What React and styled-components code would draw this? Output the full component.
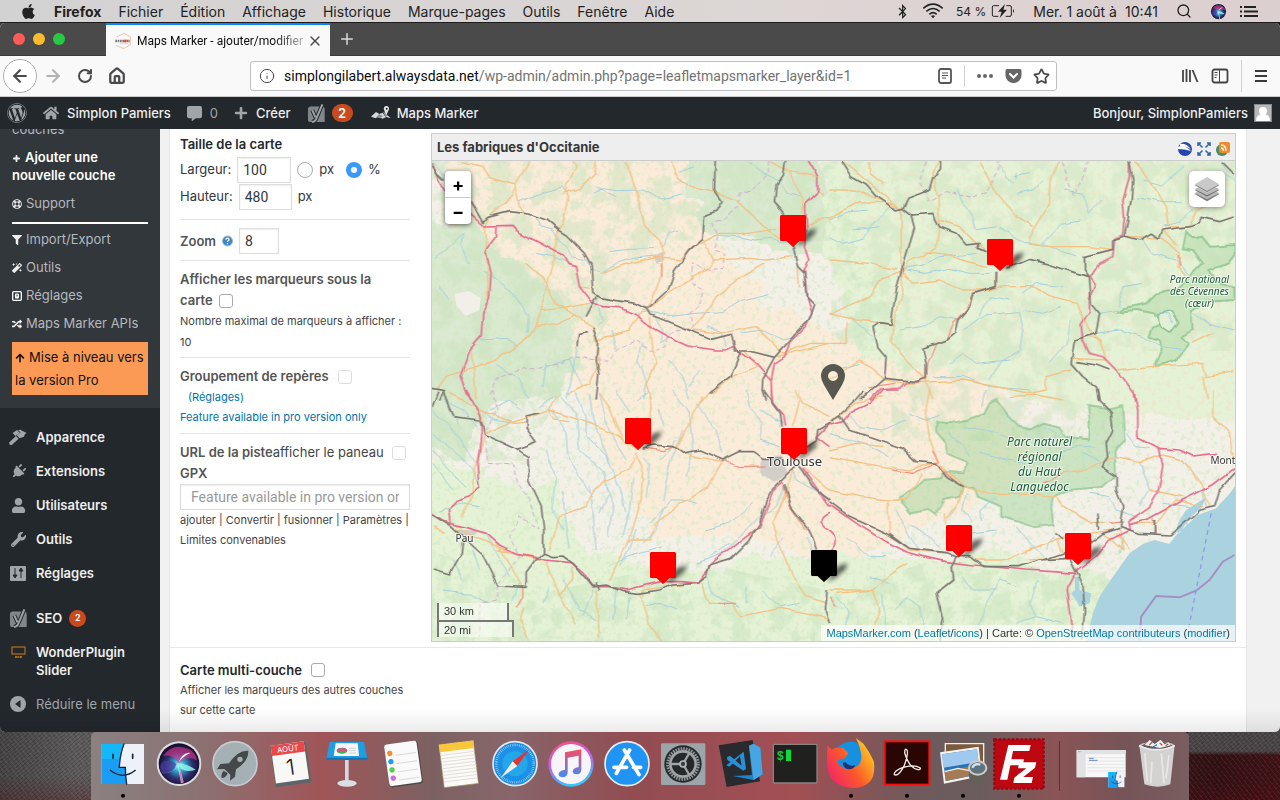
import React from "react";
import styled, { createGlobalStyle } from "styled-components";
import { FaWordpress, FaHome, FaCommentAlt, FaPlus, FaRegLifeRing, FaFilter, FaMagic, FaRandom, FaArrowUp, FaPlug, FaUser, FaWrench, FaApple, FaBluetoothB } from "react-icons/fa";
import { Search, ArrowLeft, ArrowRight, RotateCw, House, Info, Star, X, Plus } from "lucide-react";

const Global = createGlobalStyle`
  *, *::before, *::after { box-sizing: border-box; }
  body { margin: 0; font-family: Inter, "Open Sans", sans-serif; font-size: 13px; color: #444; background: #2a2627; }
  a { color: inherit; text-decoration: none; }
  button { font: inherit; color: inherit; background: none; border: 0; padding: 0; display: inline-flex; align-items: center; justify-content: center; }
  svg { display: block; flex: none; }
`;

const Desktop = styled.div`
  height: 100vh;
  display: flex;
  flex-direction: column;
  overflow: hidden;
  background:
    repeating-linear-gradient(52deg, rgba(255,255,255,.06) 0 1px, transparent 1px 4px),
    repeating-linear-gradient(-40deg, rgba(0,0,0,.14) 0 1px, transparent 1px 3px),
    linear-gradient(to bottom, transparent 97%, rgba(90,12,20,.3) 100%),
    linear-gradient(to bottom, #4a4647 30%, transparent 36%) right bottom / 92px 70px no-repeat,
    linear-gradient(to right, #454343 0, #5c5a5a 6%, #6b5556 50%, #331013 95%, #421317 100%);
`;

/* macOS menu bar */
const MenuBar = styled.header`
  flex: none;
  height: 23px;
  padding: 0 22px 0 20px;
  display: flex;
  align-items: center;
  justify-content: space-between;
  background: linear-gradient(to right, #d3d2d2, #dcd6d5 60%, #dccfcf);
  border-bottom: 1px solid #1c1c1c;
  color: #222;
  font-size: 14px;
`;
const MenuList = styled.nav`
  display: flex;
  align-items: center;
  gap: 17px;
  white-space: nowrap;
`;
const MenuButton = styled.button`
  font-weight: ${(p) => (p.$bold ? 700 : 400)};
`;
const StatusList = styled.div`
  display: flex;
  align-items: center;
  gap: 18px;
  white-space: nowrap;
`;
const StatusGroup = styled.span`
  display: flex;
  align-items: center;
  gap: ${(p) => p.$gap}px;
  font-size: ${(p) => p.$size || 14}px;
`;

/* Browser window */
const BrowserWindow = styled.section`
  flex: 1;
  min-height: 0;
  display: flex;
  flex-direction: column;
  overflow: hidden;
  border-radius: 5px;
  background: #f1f1f1;
`;
const TabStrip = styled.div`
  flex: none;
  height: 33px;
  display: flex;
  align-items: stretch;
  background: #4a4a4a;
  color: #ddd;
  border-bottom: 1px solid #3a3a3a;
`;
const WindowButtons = styled.div`
  width: 106px;
  padding: 0 13px;
  display: flex;
  align-items: center;
  gap: 8px;
`;
const WindowButton = styled.button`
  width: 12px;
  height: 12px;
  border-radius: 50%;
  background: ${(p) => p.$color};
`;
const Tab = styled.div`
  width: 224px;
  height: 33px;
  padding: 0 9px;
  display: flex;
  align-items: center;
  gap: 6px;
  background: #f9f9fa;
  border-top: 2px solid #0a84ff;
  color: #0c0c0d;
  font-family: Roboto, sans-serif;
  font-size: 12px;
`;
const TabTitle = styled.span`
  flex: 1;
  overflow: hidden;
  white-space: nowrap;
  mask-image: linear-gradient(to right, #000 82%, rgba(0,0,0,.3));
`;
const TabClose = styled.button`
  width: 12px;
`;
const NewTab = styled.button`
  width: 34px;
`;
const Toolbar = styled.div`
  flex: none;
  height: 41px;
  display: flex;
  align-items: center;
  background: #f9f9fa;
  border-bottom: 1px solid #ccc;
  color: #4a4a4c;
`;
const NavButtons = styled.div`
  width: 250px;
  padding-left: 3px;
  display: flex;
  align-items: center;
`;
const NavButton = styled.button`
  width: 32px;
  height: 34px;
  opacity: ${(p) => (p.$dim ? 0.4 : 1)};
`;
const BackButton = styled.button`
  width: 34px;
  height: 34px;
  border-radius: 50%;
  border: 1px solid #b1b1b3;
  background: #fff;
`;
const UrlBar = styled.form`
  flex: 1;
  min-width: 0;
  height: 30px;
  padding: 0 6px 0 8px;
  display: flex;
  align-items: center;
  gap: 9px;
  background: #fff;
  border: 1px solid #c0c0c2;
  border-radius: 3px;
`;
const UrlText = styled.div`
  flex: 1;
  min-width: 0;
  overflow: hidden;
  white-space: nowrap;
  color: #737373;
  font-family: Roboto, sans-serif;
  font-size: 14px;
  b { color: #0c0c0d; font-weight: 400; }
`;
const PageActions = styled.div`
  display: flex;
  align-items: center;
  gap: 11px;
`;
const Divider = styled.span`
  width: 1px;
  height: ${(p) => p.$height}px;
  background: #d0d0d2;
`;
const ToolbarEnd = styled.div`
  width: 223px;
  padding-right: 12px;
  display: flex;
  align-items: center;
  justify-content: flex-end;
  gap: 12px;
`;

/* WordPress admin bar */
const AdminBar = styled.div`
  flex: none;
  height: 32px;
  padding: 0 8px 0 7px;
  display: flex;
  align-items: center;
  background: #23282d;
  color: #eee;
  font-weight: 500;
`;
const AdminItem = styled.a`
  display: flex;
  align-items: center;
  gap: ${(p) => p.$gap || 8}px;
  margin-right: ${(p) => p.$after || 16}px;
  white-space: nowrap;
  svg { color: #a0a5aa; }
`;
const Muted = styled.span`
  color: #a0a5aa;
  font-weight: 400;
`;
const AdminAccount = styled.a`
  margin-left: auto;
  display: flex;
  align-items: center;
  gap: 6px;
`;
const Badge = styled.span`
  min-width: ${(p) => (p.$large ? 21 : 17)}px;
  height: ${(p) => (p.$large ? 18 : 17)}px;
  border-radius: 9px;
  display: inline-flex;
  align-items: center;
  justify-content: center;
  background: #ca4a1f;
  color: #fff;
  font-size: ${(p) => (p.$large ? 13 : 9)}px;
  font-weight: 600;
`;

/* Admin body */
const Body = styled.div`
  flex: 1;
  min-height: 0;
  display: flex;
  overflow: hidden;
  position: relative;
  &::after {
    content: "";
    position: absolute;
    inset: auto 0 0 0;
    height: 24px;
    pointer-events: none;
    background: linear-gradient(to bottom, transparent, rgba(0,0,0,.08));
  }
`;
const Sidebar = styled.nav`
  flex: none;
  width: 160px;
  background: #23282d;
  color: #eee;
`;
const Submenu = styled.div`
  padding: 0 12px 13px;
  background: #32373c;
  color: #b4b9be;
`;
const ClippedEntry = styled.div`
  height: 14px;
  overflow: hidden;
  display: flex;
  align-items: flex-end;
`;
const SubLink = styled.a`
  display: block;
  padding: 5px 0;
  line-height: 18px;
  color: ${(p) => (p.$current ? "#fff" : "inherit")};
  font-weight: ${(p) => (p.$current ? 600 : 400)};
  svg { display: inline-block; vertical-align: -1px; margin-right: 4px; color: #eee; }
`;
const SubRule = styled.hr`
  margin: 5px 0 1px;
  border: 0;
  height: 2px;
  background: #fff;
`;
const Upgrade = styled.a`
  display: block;
  margin-top: 5px;
  padding: 4px 3px 3px;
  background: #fb9a55;
  color: #111;
  line-height: 23px;
  svg { display: inline-block; vertical-align: -1px; margin-right: 4px; }
`;
const MainMenu = styled.div`
  padding-top: 12px;
`;
const MainLink = styled.a`
  display: flex;
  padding: 8px 0;
  margin-bottom: ${(p) => (p.$gapAfter ? 11 : 0)}px;
  line-height: 18px;
  font-weight: ${(p) => (p.$muted ? 400 : 600)};
  color: ${(p) => (p.$muted ? "#a0a5aa" : "#eee")};
`;
const MainIcon = styled.span`
  width: 36px;
  height: 18px;
  display: flex;
  align-items: center;
  justify-content: center;
  color: #a0a5aa;
`;
const MainLabel = styled.span`
  flex: 1;
  display: flex;
  align-items: center;
  gap: 7px;
`;
const Main = styled.main`
  flex: 1;
  min-width: 0;
  padding: 0 33px 0 9px;
`;
const Panel = styled.div`
  height: 100%;
  background: #fff;
  border: solid #e5e5e5;
  border-width: 0 1px;
`;
const PanelRow = styled.div`
  display: flex;
  gap: 21px;
  padding: 4px 10px 5px;
  border-bottom: 1px solid #e8e8e8;
`;
const Settings = styled.form`
  flex: none;
  width: 230px;
  line-height: 21px;
`;
const Group = styled.div`
  padding: ${(p) => p.$pad || "8px 0 5px"};
  border-bottom: ${(p) => (p.$last ? 0 : 1)}px solid #e5e5e5;
`;
const Line = styled.div`
  display: flex;
  align-items: center;
  gap: 6px;
  height: ${(p) => p.$height || 21}px;
  color: #32373c;
  white-space: nowrap;
`;
const Heading = styled.label`
  font-weight: 600;
  color: ${(p) => (p.$dark ? "#23282d" : "#555")};
`;
const Small = styled.div`
  font-size: 11px;
  line-height: ${(p) => p.$leading || 21}px;
  padding-left: ${(p) => (p.$indent ? 8 : 0)}px;
  color: ${(p) => (p.$link ? "#0073aa" : "#444")};
  white-space: nowrap;
`;
const Field = styled.input`
  width: ${(p) => p.$width};
  height: 26px;
  padding: 0 ${(p) => p.$pad || 5}px;
  border: 1px solid #ddd;
  box-shadow: inset 0 1px 2px rgba(0,0,0,.07);
  background: #fff;
  color: #32373c;
  font: 400 14px Roboto, sans-serif;
  outline: 0;
  &::placeholder { color: #999; }
`;
const Check = styled.input`
  appearance: none;
  width: 14px;
  height: 14px;
  margin: 0 0 0 ${(p) => p.$before || 0}px;
  border: 1px solid ${(p) => (p.disabled ? "#ddd" : "#aaa")};
  border-radius: 3px;
  background: #fff;
  vertical-align: middle;
`;
const Radio = styled.input`
  appearance: none;
  width: 16px;
  height: 16px;
  margin: 0 0 0 ${(p) => p.$before || 0}px;
  border: 1px solid #aaa;
  border-radius: 50%;
  background: #fff;
  &:checked { border: 5px solid #3b99fc; }
`;
const TopAligned = styled.div`
  display: flex;
  align-items: flex-start;
  white-space: nowrap;
`;

/* Map */
const MapBox = styled.section`
  flex: 1;
  min-width: 0;
  border: 1px solid #ccc;
`;
const MapHeader = styled.div`
  height: 27px;
  padding: 0 5px;
  display: flex;
  align-items: center;
  justify-content: space-between;
  background: #eee;
  border-bottom: 1px solid #ccc;
`;
const MapTitle = styled.h2`
  margin: 0;
  font-size: 13px;
  font-weight: 700;
  color: #373737;
`;
const MapLinks = styled.div`
  display: flex;
  gap: 5px;
  padding-top: 3px;
`;
const MapView = styled.div`
  position: relative;
  height: 480px;
  overflow: hidden;
  background: #f2efe9;
`;
const Tiles = styled.svg`
  width: 100%;
  height: 100%;
`;
const MapPin = styled.button`
  position: absolute;
  left: calc(50% + ${(p) => p.$x - 402}px);
  top: ${(p) => p.$y}px;
  path:first-child { filter: blur(2px); }
`;
const ZoomControl = styled.div`
  position: absolute;
  left: 13px;
  top: 10px;
  border-radius: 4px;
  background: #fff;
  box-shadow: 0 1px 5px rgba(0,0,0,.65);
`;
const ZoomButton = styled.button`
  display: flex;
  width: 26px;
  height: 26px;
  color: #000;
  font-size: 18px;
  font-weight: 700;
  & + & { border-top: 1px solid #ccc; height: 27px; }
`;
const LayersButton = styled.button`
  position: absolute;
  right: 10px;
  top: 10px;
  width: 36px;
  height: 36px;
  border-radius: 5px;
  background: #fff;
  box-shadow: 0 1px 5px rgba(0,0,0,.4);
`;
const Scale = styled.div`
  position: absolute;
  left: 5px;
  bottom: 4px;
  font: 11px "Liberation Sans", Arial, sans-serif;
  color: #333;
`;
const ScaleBar = styled.div`
  width: ${(p) => p.$width}px;
  height: 17px;
  padding: 0 5px;
  line-height: 17px;
  background: rgba(255,255,255,.5);
  border: 2px solid #777;
  border-width: ${(p) => (p.$lower ? "2px 2px 0" : "0 2px")};
`;
const Attribution = styled.div`
  position: absolute;
  right: 0;
  bottom: 0;
  padding: 0 5px;
  height: 16px;
  line-height: 16px;
  background: rgba(255,255,255,.7);
  color: #333;
  font-family: "Liberation Sans", Arial, sans-serif;
  font-size: 11px;
  white-space: nowrap;
  a { color: #0078a8; }
`;

/* Dock */
const Dock = styled.footer`
  flex: none;
  align-self: center;
  height: 68px;
  padding: 0 4px;
  display: flex;
  border-radius: 5px 5px 0 0;
  background: linear-gradient(to right, #8b8180, #8a7374 9%, #a05558 21%, #7d6162 31%, #87666a 38%, #914d52 49%, #a34f54 64%, #6f5a5b 75%, #6a5c5e 81%, #8b5456 88%, #765458 94%, #7a5d60);
`;
const DockApp = styled.button`
  width: 56px;
  height: 68px;
  overflow: hidden;
`;
const DockSeparator = styled.span`
  width: 26px;
  padding: 9px 12px;
  &::before { content: ""; display: block; width: 1px; height: 50px; background: #4d3a3c; }
`;

const Yoast = ({ size = 18, ground = "#23282d" }) => (
  <svg width={size} height={size} viewBox="0 0 54 58">
    <path d="M9 8h34q9 0 9 9v38H9q-8 0-8-8V17q0-9 8-9z" fill="#82878c" />
    <path d="M14 19l10 22M45 1L28 41q-4 13-15 14" fill="none" stroke={ground} strokeWidth="12" />
    <path d="M14 19l10 22M45 1L28 41q-4 13-15 14" fill="none" stroke="#9ea3a8" strokeWidth="6" />
  </svg>
);
const MapsMarkerIcon = () => (
  <svg width="20" height="16" viewBox="0 0 60 48">
    <path d="M1 34l14-13 10 6 10-4 8 12 7-4 9 9-13-4-11 5-13-6-9 5-12-5z" fill="#d5d8da" />
    <path d="M25 27l-9 9 9 4 11-6zM36 20l7 15 6-2-3-9z" fill="#8d9297" />
    <path d="M46 31L39 14a8 8 0 1 1 15-1z" fill="#e3e5e6" /><circle cx="47" cy="11" r="3" fill="#23282d" />
  </svg>
);
const BrushIcon = () => (
  <svg width="18" height="16" viewBox="0 0 54 48">
    <path d="M1 40l20-19 8 8L9 47q-5 2-8-1z" fill="#a0a5aa" />
    <path d="M11 12L24 3l8 8-13 10zM27 4q8-4 12 1l14 7q-8 3-8 11l-13 5-9-9 12-9z" fill="#a0a5aa" />
  </svg>
);
const SettingsTile = () => (
  <svg width="16" height="16" viewBox="0 0 16 16"><rect x="0" y="1" width="16" height="15" rx="1" fill="#a0a5aa" /><path d="M5 3v9M11 4v9M3 10l2 3 2-3zM9 6l2-3 2 3z" fill="#23282d" stroke="#23282d" /></svg>
);
const SliderIcon = () => (
  <svg width="15" height="13" viewBox="0 0 15 13"><rect x="1" y="1" width="13" height="7" fill="none" stroke="#a9691a" strokeWidth="1.300" /><path d="M4 11h2M6.500 11h2M9 11h2" stroke="#a9691a" strokeWidth="2" /></svg>
);
const CollapseIcon = () => (
  <svg width="16" height="16" viewBox="0 0 16 16"><circle cx="8" cy="8" r="8" fill="#a0a5aa" /><path d="M10.500 4v8L5 8z" fill="#23282d" /></svg>
);
const ToggleBox = () => (
  <svg width="10" height="10" viewBox="0 0 10 10"><rect x=".7" y=".7" width="8.600" height="8.600" rx="1" fill="none" stroke="#fff" strokeWidth="1.300" /><rect x="3" y="2.500" width="4" height="5" rx="1" fill="#fff" /><path d="M4.500 3.500h1v2h-1z" fill="#32373c" /></svg>
);
const Siri = ({ size }) => (
  <svg width={size} height={size} viewBox="0 0 136 136">
    <defs><radialGradient id="siri" cx=".5" cy=".55"><stop offset="0" stopColor="#bff" /><stop offset=".3" stopColor="#2aa3c9" /><stop offset=".65" stopColor="#31306f" /><stop offset="1" stopColor="#151233" /></radialGradient></defs>
    <circle cx="68" cy="68" r="67" fill="#ddd" /><circle cx="68" cy="68" r="61" fill="url(#siri)" />
    <path d="M20 45Q50 2 100 25q20 12 22 34Q95 40 68 68 50 38 20 45z" fill="#e0378c" opacity=".6" />
    <path d="M60 70q-8 28-42 30Q2 70 24 60q24-4 36 10z" fill="#4b39a0" opacity=".7" />
    <path d="M20 95Q60 95 66 66q26 2 52 20-36 12-50-12 8 22 14 50l-8 3Q68 90 62 72 56 96 20 95z" fill="#8ff5e6" opacity=".85" />
    <path d="M66 66q14-34 36-30Q80 45 66 66z" fill="#fff" /><path d="M68 72q6 25 13 52l-7 2z" fill="#ff5fae" />
  </svg>
);
const Bars = () => (
  <svg width="14" height="14" viewBox="0 0 14 14"><path d="M1 2h12M1 7h12M1 12h12" stroke="#3a3a3c" strokeWidth="2" /></svg>
);

/* Base map, drawn as four quarter sheets at three units to the pixel. */
const SHEETS = [
  {
    at: "translate(-2 -31)",
    water: ["M8 95Q40 120 45 150M270 215L320 195 400 170 410 185M490 190L520 175 560 182 640 180 700 210 760 195M540 365L600 358 700 355M515 430L560 400 610 385 680 378M700 350L715 310 745 300M285 250L320 260 330 290 370 300 390 335 410 345 430 380 470 390 490 420 515 425M830 330L860 315 920 320 980 330 1020 325 1060 340 1100 330 1150 330M640 540L720 560 800 550 880 545 940 510 1020 490M20 385L60 350 100 310 95 345 120 400M160 420L200 450 250 490 300 560 295 610M30 470L60 510M150 630L230 625 265 650M440 650L430 720 415 805M640 640L625 690 650 750 640 805M720 690L760 740 780 805M930 610L1000 600 1060 630 1110 620M960 100L1000 130 1050 150M1050 150L1070 190 1110 200M320 370L370 380 420 400M500 500L520 570 505 580M340 720L380 700 420 690 460 770M350 700L340 770M200 700L260 740 300 805M670 550L700 600 690 640 720 620M830 590L880 610 890 650M560 200L500 170M780 770L810 720M545 600L560 660M750 130L790 110"],
    primary: ["M100 95L160 110 180 140 255 162 300 93M255 162L250 200 220 225 180 260 165 288M255 162L270 230 290 250M430 93L440 110 410 170 415 200 400 280 385 300M500 93L495 130 450 175 400 190M590 93L620 180 630 220 645 290 690 330 705 375 700 400 695 440 680 480 655 535M725 93L745 150 800 175 865 188 920 210 1000 290 1050 330M515 430L580 405 680 382 750 390 790 350 870 310 960 310 1040 295M1020 93L1080 125 1110 130 1165 140M660 535L740 470 830 420 850 390 960 385 1010 390 1090 380M820 325L850 390M285 400L340 440 380 520 435 555 490 590M385 300L375 390 355 460 320 580 300 620 200 690 130 715 50 740 20 780M330 542L400 535 480 520M318 590L380 580 435 555M125 660L135 740 140 805M165 288L175 430 175 500M490 590L510 700 480 760 420 790M660 545L630 550 600 600 530 620 500 640M450 470L480 475M780 600L830 550 860 500 940 440 1010 400M790 600L870 610 980 590 1060 670 1140 640 1200 640M1105 410L1110 470M1080 125L1120 210 1120 250M1165 185L1180 200M1130 290L1180 260 1200 265M660 560L665 640 680 700 650 760 665 805M1040 680L1200 640M945 660L980 710 910 740 850 790"],
    trunk: ["M695 400L698 440"],
    motorway: ["M8 100L30 150 44 180 123 250 165 288 248 286 262 302 380 365 400 375 415 403 438 410 450 470 485 515 520 530 570 533 620 555 640 575 665 590 700 610 740 632 775 648 860 660 890 660 910 650 980 700 1025 750 1027 812M200 288L198 320 168 360 185 430 180 500 160 550 155 620 120 660 92 740 110 790 130 812M1140 93L1165 140 1165 185 1128 220 1132 300 1125 350 1138 390 1125 420 1132 500 1148 550 1130 590 1080 640 1065 680 1035 700 1025 750"],
    rail: ["M8 110L25 135 45 152M123 210L160 275 175 262 240 245 300 252 350 270 385 300 410 315 465 370 485 405 490 490 510 503 560 512 620 520 655 538 665 555 740 585 790 605 845 628 905 613 918 663 960 663 1035 682M857 93L855 180 878 212 860 243 825 258 820 325 780 360 735 425 715 480 655 535M1068 93L1063 130 1040 165 1035 215 1062 245 1060 260M1090 350L1105 410 1125 430 1130 500 1155 525 1140 570 1100 610 1035 682 1000 745 998 780 1008 812M500 503L470 560M490 590L505 640 500 690 508 730 500 812M475 605L450 610 445 650M935 665L905 740 840 790M5 775L45 782 30 812"],
    border: ["M1020 95L1020 130 960 180 930 190 925 230 880 270 850 275 865 320 855 360 885 370 880 415 820 420 790 400 785 460 820 480 810 530 780 550 790 590 740 600 715 620 710 650 670 665 620 635 570 655 540 690 500 690 430 680 400 700 340 710 290 715 200 745 180 800"],
  },
  {
    at: "translate(398 -31)",
    water: ["M0 320L40 340 100 325 120 290 150 260 180 230 210 235M0 270L60 245 120 240M225 415L280 405 330 380 400 375 440 370M230 420L290 430 360 415 420 430 480 430M505 290L540 310 580 340 660 350 700 370 740 380M380 170L400 220 430 260 440 300 500 290M560 190L610 180 640 150M700 180L760 190 780 250 820 210M555 140L600 130M640 345L690 280 750 270M400 600L470 555 570 545 580 600 570 660 520 690 480 750M450 560L480 500 540 510M580 490L620 460 700 470M580 540L640 550 690 530M940 150L1000 165 1060 110M920 200L1000 215 1060 215M1000 290L1040 280 1090 240M870 530L880 470 940 460M810 550L870 540M930 320L970 370 1040 390 1080 440M1090 550L1140 580 1215 600M800 610L870 600 940 620 1000 650 1070 660M720 570L710 640 660 700M360 700L400 670 440 700 540 690M310 740L400 740 480 770 600 780M60 560L130 620M210 600L280 590 330 560 390 570M20 720L90 700M560 150L560 130M1170 120L1215 150M1180 100L1200 130M70 300L150 290M980 550L1020 555 1030 580M500 95L550 160"],
    primary: ["M40 93L120 160 200 225 215 240M0 180L80 180 160 215 215 235M0 265L90 215 200 220M330 270L390 290 440 340 470 360M215 240L215 400 220 480 190 590 185 640 260 720 290 750M280 365L330 370 400 390 470 410M0 390L120 400 200 420M0 555L120 500 150 450 220 425 240 390 320 355 330 280 325 200 310 130 330 93M450 95L500 190 560 260 610 290M690 95L665 150 660 220 610 300 600 345M600 340L660 350 780 350 850 358M510 415L560 400M220 430L250 460 330 450 400 480 480 480 520 470 610 470 660 500 740 520 780 600 810 630M915 95L980 180 1010 230 1020 290M885 318L1000 325 1050 370 1045 410 1070 440M1000 290L1080 290 1100 240 1170 200M1000 300L1040 345M860 720L960 710 1120 700 1130 740 1215 725M725 685L830 690 810 625 780 620M120 96L120 130 160 160M0 550L80 570 180 580M0 640L50 640 50 580M0 750L90 690 165 750M165 750L230 760 400 750 600 790 650 780 650 740 725 720M290 750L310 805M1120 740L1130 805M1090 640L1150 610"],
    trunk: ["M503 425L500 470 430 490 410 540 370 580 350 630 320 640 295 700 290 750M1045 375L1052 410M120 770L200 760"],
    motorway: ["M900 95L900 140 880 210 885 260 880 315 855 325 850 380 810 400 785 440 800 460 780 510 780 545 755 580 760 630 780 670 820 680 860 720 912 790 915 812M120 812L150 780 210 775 230 755 275 755"],
    rail: ["M35 93L65 140 110 165 140 200 200 240 220 235 235 205 300 180 310 145 333 120 333 93M220 235L245 255 310 250 330 290 380 310 410 345 450 340 440 355 475 365M530 415L560 405 600 388 650 400 740 430 780 440 765 420 765 380 850 358 850 330 885 318 930 330 965 310 990 325 1000 300 1080 290 1110 280 1115 262 1170 275 1215 260M900 95L910 150 905 210 895 270 885 318M245 255L255 295 235 360 220 410 200 480 185 580 150 575 130 590 145 650 170 680 165 745 260 755 290 745 290 700 280 655 350 630 375 610 385 570 420 530 430 490 500 470 500 425M165 745L90 810M780 440L785 520 810 550 800 610 735 630 725 700 760 740 805 775 812 812M1180 95L1215 130M740 695L800 705 840 720"],
    border: ["M290 95L270 160 300 215 350 185 430 205 470 190 500 130 510 95M700 95L710 150 730 195 760 150 775 95"],
  },
  {
    at: "translate(-2 229)",
    water: ["M10 60L60 110 100 160 140 220M10 130L70 180 130 240 150 280M40 30L100 60 140 110M10 180L60 240 110 290M10 220L50 270 70 300M160 60L190 90 260 100M60 60L90 100M370 60L410 130 415 200 440 240 480 310M390 10L440 70 450 180 520 240 540 310 510 370M440 10L470 80 470 140 530 200 570 290 590 370M480 10L490 90 510 140 540 220M510 10L530 90 560 160 590 210M400 300L400 350 410 420 420 480M350 180L380 270 370 360 400 420M480 290L490 360 500 480M530 280L550 350 535 440M610 260L600 360 580 440M640 200L660 230 650 320M700 350L680 420 640 460M690 210L720 180 740 150M620 420L600 480 570 530M660 400L720 330 770 330 800 340M560 0L600 70M620 30L660 0M700 110L690 60M730 0L780 70 790 180 770 260M800 40L860 120 880 190M760 120L720 220 700 330M950 0L960 50 1000 100 990 150 1050 170M990 60L1060 100M1070 280L1040 350 990 380 930 440 880 490 800 520M830 420L900 400 970 340M840 500L900 460M1060 440L1020 500M1130 440L1170 540M540 530L600 500 700 470M400 570L450 660 500 690M340 640L360 590M170 430L200 490 240 560M130 480L150 540M70 510L100 570M270 580L250 630M490 600L460 680M560 600L550 690M600 620L590 690M830 550L850 610 930 650M950 640L950 590M1000 600L1050 650 1110 640M30 360L90 340 150 350M180 60L240 30 280 60M330 50L370 20M650 650L690 640 740 660M40 600L120 610 180 640M1080 210L1100 270 1190 320"],
    primary: ["M60 10L150 60 170 130 240 100 340 65 360 60M150 60L260 100 290 95M360 60L480 100 550 130 620 175M380 15L360 60 375 90M510 10L545 60 580 150M660 5L670 60 650 130M820 20L790 80 740 170M850 0L800 50M620 185L640 230 635 330 600 450 540 570M620 200L600 240 530 270 480 320 470 350 390 380 360 480M165 135L135 240 130 320 95 380M65 410L240 485 340 510M200 460L250 540 280 595M1090 240L1060 330 1030 400 1060 490 1090 560 1130 620 1190 640M885 205L835 290 740 350 680 400 660 450 595 450M730 170L800 200 880 215M815 580L840 640 910 640 930 680 1050 655 1140 670 1200 690M500 600L510 740M630 610L660 700 700 752M430 530L430 570 390 615 350 510M390 615L440 700M1110 30L1090 110M1100 0L1120 40 1200 80M640 620L640 600 710 590 800 580M1120 230L1200 300M1030 400L1080 290M280 650L270 690 295 752M45 430L10 410M200 480L330 500M375 90L420 95"],
    trunk: ["M650 175L700 182 735 170M885 210L930 230 1010 228M280 595L280 620 260 655M1060 280L1080 345 1130 420M870 640L920 640"],
    motorway: ["M110 0L155 80 155 130 145 220 152 290 120 320 80 335 60 355 65 400 170 430 210 465 260 490 320 500 345 510 425 518 460 545 490 590 540 590 590 600 690 575 760 575 805 580 830 545 845 520 930 455 990 410 1020 330 1040 290 1060 275M1025 0L1030 40 1060 75 1065 110M5 370L65 405M1120 235L1200 350M1200 370Q1150 390 1200 420M1200 100L1160 140 1200 170"],
    rail: ["M5 60L25 5M40 5L70 80 150 90 160 105 165 135 260 178 295 200 298 270 335 350 343 420 342 490 320 510 290 550 290 592 205 588 160 495 65 410 5 372M260 178L320 155 290 115 290 75 330 65M100 450L95 490 60 555 10 540M342 490L370 500 400 498 430 520 490 590 530 585 580 605 625 610 690 600 730 585 800 580 830 560 840 525 905 505 960 450 990 400 1010 330 1035 290 1080 245 1100 232M640 175L670 165 730 170 760 190 810 180 880 210 930 185 970 185 1000 205 1060 205M1000 0L1050 70 1055 110M1110 230L1150 290 1200 330M1065 280L1085 350 1140 420 1165 490M1130 170L1160 150 1165 120 1200 100M500 580L510 600M1190 600L1185 660 1200 700"],
    border: ["M190 0L200 60 165 130 175 220 250 225 265 280 300 330 325 420 270 380 240 440 270 500 240 540 205 580 200 630 155 640 150 740"],
  },
  {
    at: "translate(398 229)",
    water: ["M50 70L90 110 160 120 230 90M240 70L290 90 330 75M360 130L400 165 420 200M400 110L470 120 560 150M450 190L530 210 610 220 680 200M410 310L400 360 430 400M500 320L450 360 460 390M380 350L360 380M420 430L500 420M200 360L230 420 270 480M240 400L300 440 330 470M560 410L600 460 640 500M670 440L650 480M700 180L740 170 800 170M760 190L820 220M890 130L920 170 960 175M930 210L950 270 960 300 930 350M780 310L840 320 860 360 920 380M870 490L880 440M570 590L510 570 470 640 440 740M620 570L600 640 620 680M400 560L430 600 500 600M200 660L230 620 270 650 300 750M160 620L170 720M20 620L60 660 40 740M120 560L180 580M460 50L470 0M640 110L680 130 660 180M1000 340L1080 350M1070 370L1080 430M1120 300L1130 350M0 130L100 160 180 200M50 440L120 500 170 500M560 700L620 680 700 700"],
    primary: ["M0 100L80 40 160 20M0 180L80 160 160 170M300 0L290 60 300 150 325 205M0 200L160 230 240 240 320 215M0 300L90 320 175 330 230 330 280 250M175 330L180 430 240 480 350 490M400 290L480 310 600 310 680 320 700 350 790 400 830 400M860 200L930 215 1000 195 1060 210 1120 290 1140 350M690 250L760 240 860 200M540 20L620 15 700 30M345 370L345 400M350 385L390 330 400 290M430 510L520 510 590 480 680 450 780 430 850 420M900 400L980 400 1040 330 1120 350M1150 0L1150 80 1200 130 1210 200M0 600L130 600 230 520M130 600L150 650 130 750M130 600L20 610M870 420L880 480 820 430M860 430L900 480M680 450L700 490M320 215L400 285M600 510L760 500M960 300L1060 320"],
    trunk: ["M185 240L250 250 330 215 310 180M320 220L370 270M840 400L880 395M970 385L980 430M700 250L640 280M0 620L20 650M330 230L350 260"],
    motorway: ["M0 105L40 95 60 70 120 40 160 0 210 0M912 0L925 60 925 140 990 175 1000 230 985 310 960 350 895 395 900 420 840 450 800 500 740 545 710 600 720 660 730 752M990 175L1050 180 1090 198 1160 190M895 405L960 385 1060 330 1150 285 1215 235M0 345L80 400 160 450 240 490 350 515 430 525 590 540 670 545 740 550M0 420Q40 450 0 490"],
    rail: ["M0 95L30 75 80 30 105 0M30 75L60 120 150 150 220 175 260 215 320 220 350 260 400 290M0 335L60 380 170 430 240 475 350 488 380 500 420 500 460 530 570 530 630 510 720 505 740 545 760 580 765 660 760 752M805 0L810 30 845 65 850 120 830 160 835 200 815 230 860 260 860 300 880 350 870 410 930 430 1025 435 1110 360 1155 350 1170 300 1215 250M870 415L820 430 780 460 700 490 640 510M810 420L805 370M975 430L975 390M380 500L365 530 370 570 320 610 340 690 330 752M675 430L700 450M240 475L180 430"],
    border: [],
  },
];

const WEIGHTS = [
  ["water", "#a3d0de", 3],
  ["border", "#cfa9d0", 3],
  ["primary", "#f3c283", 4],
  ["trunk", "#f5937c", 4],
  ["motorway", "#e56c8c", 5],
  ["rail", "#7d7874", 5],
];

const BaseMap = () => (
  <Tiles viewBox="0 0 804 480" preserveAspectRatio="xMidYMid slice" role="img" aria-label="Carte Occitanie">
    <defs>
      <filter id="wood" x="0" y="0" width="100%" height="100%">
        <feTurbulence type="fractalNoise" baseFrequency=".05" numOctaves="6" seed="4" />
        <feColorMatrix values="0 0 0 0 0  0 0 0 0 0  0 0 0 0 0  6 0 0 0 -2.600" result="n" />
        <feComposite in="SourceGraphic" in2="n" operator="in" />
      </filter>
      <filter id="specks" x="0" y="0" width="100%" height="100%">
        <feTurbulence type="fractalNoise" baseFrequency=".2" numOctaves="4" seed="12" />
        <feColorMatrix values="0 0 0 0 0  0 0 0 0 0  0 0 0 0 0  10 0 0 0 -5.600" result="n" />
        <feComposite in="SourceGraphic" in2="n" operator="in" />
      </filter>
      <filter id="rough" x="-5%" y="-5%" width="110%" height="110%" colorInterpolationFilters="sRGB">
        <feTurbulence type="fractalNoise" baseFrequency=".03" numOctaves="4" seed="7" />
        <feDisplacementMap in="SourceGraphic" scale="34" xChannelSelector="R" yChannelSelector="G" />
      </filter>
      <filter id="winding" x="-2%" y="-2%" width="104%" height="104%" colorInterpolationFilters="sRGB">
        <feTurbulence type="fractalNoise" baseFrequency=".07" numOctaves="1" seed="3" />
        <feDisplacementMap in="SourceGraphic" scale="6" xChannelSelector="R" yChannelSelector="G" />
      </filter>
    </defs>
    <rect width="804" height="480" fill="#f3f0e8" />
    <g filter="url(#rough)">
      <path d="M20 -20H250L265 60 335 140 400 170 500 190 560 215 600 300 560 340 480 370 420 400 370 390 300 370 230 380 190 330 160 250 110 190 60 130 20 50Z" fill="#fbecda" />
      <path d="M400 -20H830V260L640 255 560 225 430 195 390 90ZM-20 300L120 330 150 390 230 410 400 390 480 400 560 390 640 420 700 420 690 500H-20Z" fill="#e5f2d6" />
      <path d="M-20 60L40 62 120 130 150 190 130 230 60 245 30 300 -20 280ZM250 -20H395V95L330 90 270 70Z" fill="#dae9cf" />
    </g>
    <path d="M0 0H804V480H0Z" fill="#cde8bd" opacity=".4" filter="url(#specks)" />
    <path d="M0 0H804V190H660V280H460V190H400V80H230L150 200 90 300 0 300ZM0 390L120 430 260 400 400 430 500 400 690 410V480H0Z" fill="#cbe3bf" opacity=".5" filter="url(#wood)" />
    <path d="M400 0H804V260H500Z" fill="#f8e8d5" opacity=".5" filter="url(#specks)" />
    <path d="M23 133l14-3 12 7-1 12-14 6-9-10z" fill="#f2efe9" />
    <g transform="translate(398 229) scale(.33333)">
      <path d="M1215 290L1205 305 1160 355 1105 375 1040 435 1020 462 975 450 940 462 900 490 850 560 810 620 790 670 770 760H1220V290ZM1037 425L1050 390 1070 360 1130 322 1115 355 1080 385 1050 430ZM735 560L748 560 750 600 785 610 780 640 750 650 740 630 725 610 737 600Z" fill="#abd3df" />
      <path d="M930 752L935 680 980 618 1050 622 1100 602 1140 570 1180 515 1215 495" fill="none" stroke="#a58fc4" strokeWidth="6" />
      <path d="M1145 370L1100 600 1070 752" fill="none" stroke="#8c9be8" strokeWidth="4" strokeDasharray="14 12" />
    </g>
    <g filter="url(#winding)">
      <g transform="translate(398 229) scale(.33333)">
        <path d="M320 95L350 103 410 90 465 70 480 40 500 30 540 80 570 110 600 118 640 98 690 110 705 140 780 148 780 90 775 45 840 55 878 45 885 150 855 180 860 255 820 290 720 300 670 320 665 350 672 405 620 412 515 380 515 350 445 320 435 295 400 290 390 320 345 330 320 375 300 360 245 370 208 325 250 300 285 270 330 265 345 245 405 250 410 215 350 190 350 160 320 125Z" fill="#9fd49a" fillOpacity=".45" stroke="#7dbd85" strokeOpacity=".6" strokeWidth="6" />
      </g>
      <g transform="translate(398 -31) scale(.33333)">
        <path d="M1070 305L1090 325 1120 320 1145 350 1215 345 1215 375 1195 400 1140 420 1165 460 1215 470 1215 510 1130 515 1085 545 1090 600 1055 620 1080 640 1040 690 975 710 1000 660 990 630 960 620 970 590 1000 575 970 550 920 540 867 545 880 535 950 520 980 490 1040 480 1080 440 1120 400 1090 360 1060 355Z" fill="#bfe0b5" fillOpacity=".7" stroke="#7dbd85" strokeOpacity=".7" strokeWidth="6" />
        <path d="M985 555l40-10 20 30-25 35-30-20z" fill="#e4efd8" stroke="#7dbd85" strokeWidth="4" />
      </g>
      <path d="M22 368l24 2-4 8-12 2zM330 298l20-4 6 18-14 10-12-8zM222 96l10-4 2 8-10 2z" fill="#cbc7c4" opacity=".8" />
      {WEIGHTS.map(([kind, color, width]) =>
        SHEETS.map((sheet) => (
          <g key={kind + sheet.at} transform={sheet.at + " scale(.33333)"} fill="none" strokeLinejoin="round" stroke={color} strokeWidth={width} strokeDasharray={kind === "border" ? "14 9" : undefined}>
            {sheet[kind].map((d) => <path key={d} d={d} />)}
          </g>
        ))
      )}
    </g>
    <g fontFamily="'Noto Sans', sans-serif" textAnchor="middle" stroke="#fff" strokeOpacity=".7" strokeWidth="2" paintOrder="stroke" fill="#333">
      <text x="363" y="305" fontSize="13">Toulouse</text>
      <text x="33" y="381" fontSize="10">Pau</text>
      <text x="779" y="303" fontSize="10" textAnchor="start">Mont</text>
      <g fontStyle="italic" fill="#1c5c37">
        <g fontSize="12"><text x="608" y="285">Parc naturel</text><text x="608" y="300">régional</text><text x="608" y="315">du Haut</text><text x="608" y="330">Languedoc</text></g>
        <g fontSize="10"><text x="768" y="122">Parc national</text><text x="768" y="134">des Cévennes</text><text x="768" y="146">(cœur)</text></g>
      </g>
    </g>
  </Tiles>
);

const PINS = [[348, 54], [555, 78], [193, 257], [218, 391], [349, 267], [379, 389, "#000"], [514, 364], [633, 372]];
const PinShape = ({ color = "#f00" }) => (
  <svg width="40" height="34" viewBox="0 0 40 34">
    <path d="M16 31L27 16 37 13 34 20 23 29z" fill="#000" fillOpacity=".6" />
    <path d="M1.500 0h23q1.500 0 1.500 1.500v23q0 1.500-1.500 1.500h-5L13 32l-6.500-6h-5Q0 26 0 24.500v-23Q0 0 1.500 0z" fill={color} stroke="#400" strokeOpacity=".25" strokeWidth=".5" />
  </svg>
);

/* Each icon keeps the viewBox of its own slot in the dock strip. */
const Face = () => (
  <>
    <path d="M305 57h127v120H305z" fill="#eef2f8" /><path d="M305 57h67q-12 30-14 70h18q0 25 4 50h-75z" fill="#1a9df4" />
    <path d="M305 57h67q-8 20-11 45h-56z" fill="#12c3fb" opacity=".7" />
    <path d="M339 88v12M398 88v12" stroke="#123" strokeWidth="5" strokeLinecap="round" /><path d="M331 136q38 30 75 0M372 57q-12 30-14 70h18q0 25 4 50" fill="none" stroke="#123" strokeWidth="4" strokeLinecap="round" />
  </>
);
const DOCK = [
  { name: "Finder", x: 285, running: true, art: <Face /> },
  { name: "Siri", x: 453, art: <svg x="469" y="48" width="136" height="136"><Siri size={136} /></svg> },
  { name: "Launchpad", x: 621, art: <><circle cx="705" cy="116" r="66" fill="#a5b0b4" stroke="#c5ccd0" strokeWidth="5" /><path d="M745 77q-32-2-58 38l-26 2-10 16 22-1 18 17-1 18 15-12 3-22q38-24 37-56z" fill="#44484b" /><circle cx="720" cy="103" r="8" fill="#a5b0b4" /><path d="M671 137q-9 10-6 22 13 0 18-14z" fill="#44484b" /></> },
  { name: "Calendrier", x: 789, art: <g transform="rotate(-8 870 116)"><path d="M818 58h108v122H818z" fill="#5c6668" /><path d="M820 55h100v114H820z" fill="#f8f8f6" /><path d="M820 55h100v31H820z" fill="#e8484a" /><text x="870" y="79" textAnchor="middle" fontSize="23" fill="#fff">AOÛT</text><text x="870" y="150" textAnchor="middle" fontSize="66" fontWeight="300" fill="#222">1</text></g> },
  { name: "Keynote", x: 957, art: <><path d="M1035 105h11v70h-11z" fill="#d4d8dc" /><ellipse cx="1041" cy="175" rx="29" ry="10" fill="#d8e0e6" /><path d="M989 51h103l10 50H979z" fill="#219de2" /><path d="M979 98h123v6H979z" fill="#1173b4" /><path d="M1007 55h66l4 38h-76z" fill="#f7f9fa" /><ellipse cx="1026" cy="77" rx="16" ry="9" fill="#39b54a" /><path d="M1026 77v-9q14 0 16 9zM1026 77l-14 5q-5-10 6-13z" fill="#e8478b" /><path d="M1048 70h20M1048 77h20M1048 84h20" stroke="#bbb" strokeWidth="2" /></> },
  { name: "Rappels", x: 1125, art: <g transform="rotate(-8 1210 116)"><rect x="1161" y="54" width="100" height="128" rx="8" fill="#4b4547" /><rect x="1160" y="52" width="98" height="126" rx="8" fill="#fafafa" />{["#fb8b24", "#1f9bf0", "#4cd04e", "#c86fe0"].map((c, i) => <g key={c}><circle cx="1174" cy={80 + i * 25} r="8" fill={c} /><path d={`M1190 ${88 + i * 25}h62`} stroke="#ccc" strokeWidth="2" /></g>)}</g> },
  { name: "Notes", x: 3, art: <g transform="rotate(-7 87 116)"><path d="M34 52h104v130H34z" fill="#fbfaf6" stroke="#9a8450" strokeWidth="2" /><path d="M34 52h104v23H34z" fill="#f9c73b" /><path d="M34 85h104M34 95h104M34 105h104M34 115h104M34 125h104M34 135h104M34 145h104M34 155h104M34 165h104" stroke="#d5d2cc" strokeWidth="2" /></g> },
  { name: "Safari", x: 171, art: <><circle cx="255" cy="116" r="66" fill="#1c8fe6" stroke="#e4e8ec" strokeWidth="5" /><circle cx="255" cy="116" r="38" fill="#27bff0" opacity=".5" /><circle cx="255" cy="116" r="56" fill="none" stroke="#cfe9fb" strokeWidth="7" strokeDasharray="1.500 4" /><path d="M298 73l-36 50-14-14z" fill="#e8322f" /><path d="M212 159l36-50 14 14z" fill="#f1efec" /></> },
  { name: "iTunes", x: 339, art: <><defs><linearGradient id="tunes" x2=".3" y2="1"><stop offset="0" stopColor="#fb4f6b" /><stop offset=".5" stopColor="#c45ce8" /><stop offset="1" stopColor="#3bc3fb" /></linearGradient><linearGradient id="note" x2="0" y2="1"><stop offset="0" stopColor="#fb4a5f" /><stop offset="1" stopColor="#3f8df8" /></linearGradient></defs><circle cx="423" cy="117" r="68" fill="url(#tunes)" /><circle cx="423" cy="117" r="60" fill="#f7f5fa" /><path d="M405 82l49-9v61q0 12-14 14-12 0-12-9 2-11 18-12V92l-33 6v42q0 15-14 17-13 0-13-10 2-11 19-12z" fill="url(#note)" /></> },
  { name: "App Store", x: 507, art: <><circle cx="591" cy="116" r="66" fill="#2094f4" stroke="#e8edf2" strokeWidth="5" /><path d="M599 75l-40 70M583 75l44 74M552 127h38M610 127h22" stroke="#fff" strokeWidth="11" strokeLinecap="round" /></> },
  { name: "Préférences Système", x: 675, art: <><rect x="693" y="55" width="133" height="125" rx="4" fill="#9ca5a9" /><circle cx="759" cy="117" r="56" fill="#26282a" /><circle cx="759" cy="117" r="46" fill="none" stroke="#8e9396" strokeWidth="9" strokeDasharray="5 3" /><circle cx="759" cy="117" r="38" fill="none" stroke="#9fa4a6" strokeWidth="8" /><path d="M759 117h-38M759 117l19 33M759 117l19-33" stroke="#9fa4a6" strokeWidth="7" /><circle cx="759" cy="117" r="9" fill="#3a3d3f" stroke="#b3b8ba" strokeWidth="5" /></> },
  { name: "Visual Studio Code", x: 843, art: <><path d="M866 61l102-16 22 124-100 17z" fill="#292a2e" /><path d="M957 62l14-6 20 12 7 80-27 17-63-12 58-3z" fill="#1e86c8" /><path d="M957 62l14-6 20 12 7 80-27 17z" fill="#46a5e2" /><path d="M891 97l9-5 47 41-7 4-48-32zM941 80l7 52-11 4-7-42-32 31-9-4z" fill="#2491d8" /></> },
  { name: "iTerm", x: 1011, art: <><rect x="1030" y="58" width="131" height="116" rx="3" fill="#20211f" stroke="#8a8482" strokeWidth="4" /><text x="1040" y="105" fontSize="36" fontFamily="'Liberation Mono', monospace" fontWeight="700" fill="#1fc441">$</text><path d="M1068 74h15v34h-15z" fill="#10d843" /></> },
  { name: "Firefox", x: -81, running: true, art: <><defs><linearGradient id="fox" x1="0" y1=".8" x2="1" y2=".1"><stop offset="0" stopColor="#f4216c" /><stop offset=".45" stopColor="#fb5a2a" /><stop offset="1" stopColor="#ffe21f" /></linearGradient></defs><circle cx="3" cy="108" r="58" fill="#1690df" /><path d="M-68 62q10 4 13 12 15-10 35-5l15 16-11 15-22 6q6 25 32 26 42-5 40-38-2-28-17-55 18 12 24 18 16 21 30 51 4 21-1 44-14 37-65 37-78-7-74-88z" fill="url(#fox)" /><path d="M-13 112q12 15 29 8-6 14-19 13-17-2-19-20z" fill="#20346c" /></> },
  { name: "Acrobat Reader", x: 87, running: true, art: <><rect x="104" y="49" width="134" height="130" fill="#290604" stroke="#f5110d" strokeWidth="6" /><path d="M133 149q-3-10 24-21 35-11 54 1 1 7-10 4-24-5-37-49 0-15 6-10 7 8-7 47-17 34-30 28z" fill="none" stroke="#f3ecea" strokeWidth="4" /></> },
  { name: "Aperçu", x: 255, running: true, art: <><path d="M286 56h115v92H286z" fill="#7b5b3c" stroke="#f2f0ec" strokeWidth="4" /><path d="M270 82l116-17 10 88-114 23z" fill="#f2f2f0" /><path d="M276 88l105-15 9 74-102 21z" fill="#2b70b4" /><path d="M276 88l105-15 5 38-106 17z" fill="#9fc9ee" /><path d="M283 139l102-20 3 28-101 21z" fill="#a47b54" /><path d="M284 140l40-10 30 6 20-8" fill="none" stroke="#e9f1f4" strokeWidth="4" /><circle cx="383" cy="150" r="27" fill="#645f59" /><ellipse cx="383" cy="129" rx="26" ry="20" fill="#5e7480" stroke="#cfcac4" strokeWidth="6" /><path d="M367 128q7-15 24-9" fill="none" stroke="#cbe7f6" strokeWidth="7" /></> },
  { name: "FileZilla", x: 423, running: true, art: <><rect x="433" y="43" width="148" height="148" fill="#bd0711" stroke="#9a0510" strokeWidth="7" strokeDasharray="8 5" /><path d="M475 60h67l-4 18h-49l-5 25h38l-4 18h-37l-9 43h-22zM508 112h51l-4 16-35 28h29l-4 18h-55l3-16 36-28h-25z" fill="#fff" /></> },
  null,
  { name: "Fenêtre du Finder", x: 669, art: <><path d="M680 75h147v82H680z" fill="#f7f7f7" /><path d="M680 75h147v13H680zM680 88h27v69h-27z" fill="#e1e2e4" /><path d="M712 98h112M712 108h112M712 118h112M712 128h112M712 138h112" stroke="#ddd" strokeWidth="2" /><path d="M684 80h10" stroke="#f17062" strokeWidth="3" strokeDasharray="2 2" /><path d="M717 100h14M717 106h26" stroke="#68c" strokeWidth="3" /><g transform="translate(775 141) scale(.38) translate(-305 -57)"><Face /></g></> },
  { name: "Corbeille", x: 837, art: <><path d="M868 60q52-22 106 0l-13 118q-38 14-78 0z" fill="#d4d1d1" /><path d="M874 62q47-30 94 0-44 25-94 0z" fill="#5e5e60" /><path d="M884 60l15-15 15 12 18-13 12 14 12-6 6 9-32 8z" fill="#f1f1ef" /><path d="M898 60l9-9M929 54l8 7M947 62l8-5" stroke="#c45448" strokeWidth="4" /><path d="M909 66l12-7" stroke="#38c" strokeWidth="4" /><path d="M867 62q52 24 107 0" fill="none" stroke="#eee" strokeWidth="5" /><path d="M884 84l8 85M906 110l-4 65M934 85l8 90M957 90l-9 70" stroke="#f2f0f0" strokeWidth="5" opacity=".7" /></> },
];

const MENUS = ["Fichier", "Édition", "Affichage", "Historique", "Marque-pages", "Outils", "Fenêtre", "Aide"];

export default function App() {
  return (
    <>
      <Global />
      <Desktop>
        <MenuBar>
          <MenuList aria-label="Barre des menus">
            <MenuButton aria-label="Apple"><FaApple size={17} /></MenuButton>
            <MenuButton $bold>Firefox</MenuButton>
            {MENUS.map((m) => <MenuButton key={m}>{m}</MenuButton>)}
          </MenuList>
          <StatusList>
            <StatusGroup $gap={12} $size={12}>
              <FaBluetoothB size={15} />
              <svg width="22" height="16" viewBox="0 0 66 48"><path d="M4 16q29-25 58 0M13 25q20-17 40 0M22 34q11-10 22 0" fill="none" stroke="#222" strokeWidth="5" /><path d="M27 39q6-4 12 0l-6 7z" fill="#222" /></svg>
              <StatusGroup $gap={5} $size={12}>54 %
                <svg width="24" height="14" viewBox="0 0 72 42"><path d="M24 5H8q-4 0-4 4v24q0 4 4 4h14M46 5h11q4 0 4 4v24q0 4-4 4H44" fill="none" stroke="#222" strokeWidth="3" /><path d="M66 15q6 6 0 12z" fill="#222" /><path d="M42 0L21 23h11l-6 19 22-25H37z" fill="#222" /></svg>
              </StatusGroup>
            </StatusGroup>
            <StatusGroup $gap={8}><span>Mer. 1 août à</span><span>10:41</span></StatusGroup>
            <Search size={16} strokeWidth={2} />
            <StatusGroup $gap={13}>
              <Siri size={17} />
              <svg width="18" height="13" viewBox="0 0 18 13"><path d="M0 2h2M4 2h12M0 6.500h2M4 6.500h14M0 11h2M4 11h14" stroke="#222" strokeWidth="2" /></svg>
            </StatusGroup>
          </StatusList>
        </MenuBar>

        <BrowserWindow>
          <TabStrip>
            <WindowButtons>
              <WindowButton $color="#fc5b57" aria-label="Fermer" />
              <WindowButton $color="#fdbc2e" aria-label="Réduire" />
              <WindowButton $color="#28c840" aria-label="Agrandir" />
            </WindowButtons>
            <Tab>
              <svg width="16" height="16" viewBox="0 0 48 48"><path d="M4 12L28 1l18 10v24L26 47 3 37" fill="none" stroke="#f2a58c" strokeWidth="2" /><path d="M1 24h44" stroke="#777" strokeWidth="7" strokeDasharray="5 2" /><path d="M27 24h8" stroke="#e64b3c" strokeWidth="7" /><path d="M14 32h26" stroke="#ccc" strokeWidth="2" /></svg>
              <TabTitle>Maps Marker - ajouter/modifier</TabTitle>
              <TabClose aria-label="Fermer l'onglet"><X size={16} color="#4a4a4c" /></TabClose>
            </Tab>
            <NewTab aria-label="Nouvel onglet"><Plus size={18} /></NewTab>
          </TabStrip>
          <Toolbar>
            <NavButtons>
              <BackButton aria-label="Précédent"><ArrowLeft size={20} strokeWidth={2.500} /></BackButton>
              <NavButton $dim aria-label="Suivant"><ArrowRight size={20} strokeWidth={2.500} /></NavButton>
              <NavButton aria-label="Actualiser"><RotateCw size={16} strokeWidth={3} /></NavButton>
              <NavButton aria-label="Accueil"><House size={18} strokeWidth={3} /></NavButton>
            </NavButtons>
            <UrlBar>
              <Info size={16} strokeWidth={1.500} />
              <UrlText><b>simplongilabert.alwaysdata.net</b>/wp-admin/admin.php?page=leafletmapsmarker_layer&amp;id=1</UrlText>
              <PageActions>
                <svg width="16" height="16" viewBox="0 0 16 16"><rect x="2" y="1" width="12" height="14" rx="2" fill="none" stroke="#555" strokeWidth="1.800" /><path d="M5 5h6M5 7.500h6M5 10h4" stroke="#555" /></svg>
                <Divider $height={22} />
                <svg width="18" height="16" viewBox="0 0 18 16"><circle cx="3" cy="8" r="2" fill="#666" /><circle cx="9" cy="8" r="2" fill="#666" /><circle cx="15" cy="8" r="2" fill="#666" /></svg>
                <svg width="17" height="16" viewBox="0 0 17 16"><path d="M2 1h13q1.500 0 1.500 2v4.500a8 7.500 0 0 1-16 0V3Q.5 1 2 1z" fill="#666" /><path d="M5 6l3.500 3.500L12 6" stroke="#fff" strokeWidth="2" fill="none" strokeLinecap="round" /></svg>
                <Star size={17} strokeWidth={2.500} />
              </PageActions>
            </UrlBar>
            <ToolbarEnd>
              <svg width="18" height="16" viewBox="0 0 18 16"><path d="M2 2v12M5.500 1v13M9 2v12M11.500 2l5 12" stroke="#444" strokeWidth="1.800" /></svg>
              <svg width="18" height="16" viewBox="0 0 18 16"><rect x="1.500" y="1.500" width="15" height="13" rx="2" fill="none" stroke="#444" strokeWidth="1.800" /><path d="M8.500 1v14M3.500 4.500h3M3.500 7h3M3.500 9.500h2" stroke="#444" /></svg>
              <Divider $height={32} />
              <button aria-label="Menu"><Bars /></button>
            </ToolbarEnd>
          </Toolbar>
          <AdminBar>
            <AdminItem href="#" aria-label="WordPress"><FaWordpress size={20} /></AdminItem>
            <AdminItem href="#"><FaHome size={16} />Simplon Pamiers</AdminItem>
            <AdminItem href="#"><FaCommentAlt size={15} /><Muted>0</Muted></AdminItem>
            <AdminItem href="#"><FaPlus size={14} />Créer</AdminItem>
            <AdminItem href="#" $gap={6} $after={18}><Yoast size={19} /><Badge $large>2</Badge></AdminItem>
            <AdminItem href="#" $gap={6}><MapsMarkerIcon />Maps Marker</AdminItem>
            <AdminAccount href="#">Bonjour, SimplonPamiers
              <svg width="18" height="18" viewBox="0 0 18 18"><path d="M0 0h18v18H0z" fill="#b8b8b8" /><circle cx="9" cy="7" r="4" fill="#fff" /><path d="M2 17q0-7 7-7t7 7z" fill="#fff" /><path d="M.5.5h17v17H.5z" fill="none" stroke="#888" /></svg>
            </AdminAccount>
          </AdminBar>

          <Body>
            <Sidebar>
              <Submenu>
                <ClippedEntry><SubLink href="#">couches</SubLink></ClippedEntry>
                <SubLink href="#" $current><Plus size={9} strokeWidth={5} />Ajouter une nouvelle couche</SubLink>
                <SubLink href="#"><FaRegLifeRing size={10} />Support</SubLink>
                <SubRule />
                <SubLink href="#"><FaFilter size={10} />Import/Export</SubLink>
                <SubLink href="#"><FaMagic size={10} />Outils</SubLink>
                <SubLink href="#"><ToggleBox />Réglages</SubLink>
                <SubLink href="#"><FaRandom size={10} />Maps Marker APIs</SubLink>
                <Upgrade href="#"><FaArrowUp size={10} />Mise à niveau vers la version Pro</Upgrade>
              </Submenu>
              <MainMenu>
                <MainLink href="#"><MainIcon><BrushIcon /></MainIcon><MainLabel>Apparence</MainLabel></MainLink>
                <MainLink href="#"><MainIcon><FaPlug size={15} transform="rotate(45)" /></MainIcon><MainLabel>Extensions</MainLabel></MainLink>
                <MainLink href="#"><MainIcon><FaUser size={15} /></MainIcon><MainLabel>Utilisateurs</MainLabel></MainLink>
                <MainLink href="#"><MainIcon><FaWrench size={15} /></MainIcon><MainLabel>Outils</MainLabel></MainLink>
                <MainLink href="#" $gapAfter><MainIcon><SettingsTile /></MainIcon><MainLabel>Réglages</MainLabel></MainLink>
                <MainLink href="#"><MainIcon><Yoast size={19} /></MainIcon><MainLabel>SEO <Badge>2</Badge></MainLabel></MainLink>
                <MainLink href="#"><MainIcon><SliderIcon /></MainIcon><MainLabel>WonderPlugin Slider</MainLabel></MainLink>
                <MainLink href="#" $muted><MainIcon><CollapseIcon /></MainIcon><MainLabel>Réduire le menu</MainLabel></MainLink>
              </MainMenu>
            </Sidebar>
            <Main>
              <Panel>
                <PanelRow>
                  <Settings>
                    <Group $pad="0 0 9px">
                      <Line $height={23}><Heading as="span" $dark>Taille de la carte</Heading></Line>
                      <Line $height={27}>
                        <label htmlFor="w">Largeur:</label><Field id="w" $width="54px" defaultValue="100" />
                        <Radio id="px" type="radio" name="unit" /><label htmlFor="px">px</label>
                        <Radio id="pc" type="radio" name="unit" defaultChecked $before={6} /><label htmlFor="pc">%</label>
                      </Line>
                      <Line $height={27}><label htmlFor="h">Hauteur:</label><Field id="h" $width="53px" defaultValue="480" /><span>px</span></Line>
                    </Group>
                    <Group $pad="8px 0 6px">
                      <Line $height={26}>
                        <Heading htmlFor="z">Zoom</Heading>
                        <svg width="11" height="12" viewBox="0 0 12 12"><circle cx="6" cy="6" r="5.500" fill="#3c86c8" stroke="#9db9cf" /><path d="M4.300 4.500q0-1.600 1.700-1.600T7.700 4.500Q7.700 5.500 6 6.200v1" fill="none" stroke="#fff" strokeWidth="1.300" /><circle cx="6" cy="9" r=".9" fill="#fff" /></svg>
                        <Field id="z" $width="40px" defaultValue="8" />
                      </Line>
                    </Group>
                    <Group $pad="8px 0 4px">
                      <div><Heading htmlFor="list">Afficher les marqueurs sous la<br />carte</Heading><Check id="list" type="checkbox" $before={6} /></div>
                      <Small>Nombre maximal de marqueurs à afficher :<br />10</Small>
                    </Group>
                    <Group>
                      <Line><Heading htmlFor="cluster">Groupement de repères</Heading><Check id="cluster" type="checkbox" disabled $before={3} /></Line>
                      <Small $indent $link $leading={20}><a href="#">(Réglages)</a></Small>
                      <Small $link><a href="#">Feature available in pro version only</a></Small>
                    </Group>
                    <Group $last>
                      <TopAligned>
                        <Heading htmlFor="gpx">URL de la piste<br />GPX</Heading>
                        <label htmlFor="gpxp">afficher le paneau</label>
                        <Line><Check id="gpxp" type="checkbox" disabled $before={8} /></Line>
                      </TopAligned>
                      <Field id="gpx" $width="100%" $pad={10} placeholder="Feature available in pro version only" />
                      <Small $leading={20}>ajouter | Convertir | fusionner | Paramètres |<br />Limites convenables</Small>
                    </Group>
                  </Settings>

                  <MapBox>
                    <MapHeader>
                      <MapTitle>Les fabriques d'Occitanie</MapTitle>
                      <MapLinks>
                        <a href="#" aria-label="KML"><svg width="14" height="14" viewBox="0 0 14 14"><circle cx="7" cy="7" r="7" fill="#2446b0" /><path d="M0 5q6-3 13 4-6-2-13-2zM2 2q6-1 11 5-5-3-11-3z" fill="#fff" /></svg></a>
                        <a href="#" aria-label="Plein écran"><svg width="14" height="14" viewBox="0 0 14 14"><path d="M1 4V1h3M10 1h3v3M13 10v3h-3M4 13H1v-3M1.500 1.500l4 4M12.500 1.500l-4 4M12.500 12.500l-4-4M1.500 12.500l4-4" fill="none" stroke="#2b62a8" strokeWidth="1.500" /></svg></a>
                        <a href="#" aria-label="GeoRSS"><svg width="14" height="14" viewBox="0 0 14 14"><circle cx="6" cy="8" r="6" fill="#4b8a6b" /><rect x="3" y="0" width="11" height="11" rx="2" fill="#f08a2c" /><path d="M5 3q5 0 5 6M5 6q2.500 0 2.500 3" fill="none" stroke="#fff" strokeWidth="1.300" /></svg></a>
                      </MapLinks>
                    </MapHeader>
                    <MapView>
                      <BaseMap />
                      {PINS.map(([x, y, color]) => (
                        <MapPin key={x} $x={x} $y={y} aria-label="Marqueur"><PinShape color={color} /></MapPin>
                      ))}
                      <MapPin $x={389} $y={203} aria-label="Centre de la carte">
                        <svg width="24" height="36" viewBox="0 0 24 36"><path d="M0 0" /><path d="M12 0a12 12 0 0 1 12 12q0 4-3 9l-9 15L3 21Q0 16 0 12A12 12 0 0 1 12 0zm0 7a5 5 0 1 0 .1 0z" fill="#4a4a44" fillOpacity=".92" fillRule="evenodd" /></svg>
                      </MapPin>
                      <ZoomControl>
                        <ZoomButton aria-label="Zoom avant">+</ZoomButton>
                        <ZoomButton aria-label="Zoom arrière">−</ZoomButton>
                      </ZoomControl>
                      <LayersButton aria-label="Couches">
                        <svg width="26" height="26" viewBox="0 0 78 78"><path d="M2 54l37-20 37 20-37 22z" fill="#7a7a7a" /><path d="M2 52l37-20 37 20-37 18z" fill="#b5b5b5" /><path d="M2 43l37-20 37 20-37 20z" fill="#6d6d6d" stroke="#fff" /><path d="M2 40l37-20 37 20-37 18z" fill="#b9b9b9" /><path d="M2 28L39 6l37 22-37 21z" fill="#777" stroke="#fff" /><path d="M2 25L39 3l37 22-37 20z" fill="#c9c9c9" /></svg>
                      </LayersButton>
                      <Scale><ScaleBar $width={72}>30 km</ScaleBar><ScaleBar $width={77} $lower>20 mi</ScaleBar></Scale>
                      <Attribution><a href="#">MapsMarker.com</a> (<a href="#">Leaflet</a>/<a href="#">icons</a>) | Carte: © <a href="#">OpenStreetMap contributeurs</a> (<a href="#">modifier</a>)</Attribution>
                    </MapView>
                  </MapBox>
                </PanelRow>
                <PanelRow as="form">
                  <Group $last $pad="7px 0">
                    <Line><Heading htmlFor="multi" $dark>Carte multi-couche</Heading><Check id="multi" type="checkbox" $before={3} /></Line>
                    <Small $leading={20}>Afficher les marqueurs des autres couches<br />sur cette carte</Small>
                  </Group>
                </PanelRow>
              </Panel>
            </Main>
          </Body>
        </BrowserWindow>

        <Dock>
          {DOCK.map((app) =>
            app ? (
              <DockApp key={app.name} aria-label={app.name}>
                <svg width="56" height="68" viewBox={`${app.x} 21 168 204`}>
                  {app.art}
                  {app.running && <circle cx={app.x + 84} cy="212" r="6" fill="#000" />}
                </svg>
              </DockApp>
            ) : (
              <DockSeparator key="separator" />
            )
          )}
        </Dock>
      </Desktop>
    </>
  );
}
